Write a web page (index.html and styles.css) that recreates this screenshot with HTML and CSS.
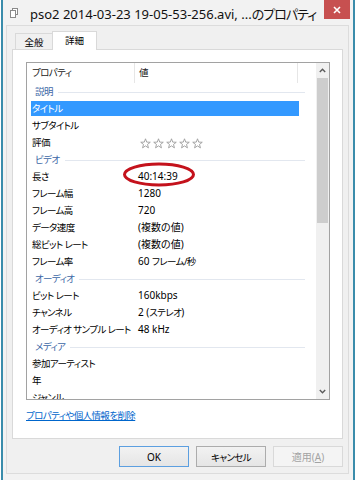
FILE: index.html
```html
<!DOCTYPE html>
<html lang="ja">
<head>
<meta charset="utf-8">
<title>プロパティ</title>
<link rel="stylesheet" href="styles.css">
</head>
<body>
<div class="window">
  <div class="titlebar">
    <svg class="app-icon" width="8" height="10" viewBox="0 0 8 10">
      <rect x="2.5" y="0.5" width="5" height="6" fill="#fff" stroke="#8a8a8a"/>
      <rect x="0.5" y="2.5" width="5" height="7" fill="#fff" stroke="#8a8a8a"/>
    </svg>
    <span class="title">pso2 2014-03-23 19-05-53-256.avi, ...<span class="title-jp">のプロパティ</span></span>
    <div class="close">
      <svg width="8" height="8" viewBox="0 0 8 8"><path d="M1 1 L7 7 M7 1 L1 7" stroke="#fff" stroke-width="1.6"/></svg>
    </div>
  </div>
  <div class="client">
    <div class="tabs">
      <div class="tab">全般</div>
      <div class="tab active">詳細</div>
    </div>
    <div class="panel">
      <div class="list">
        <div class="list-body">
          <div class="header">
            <div class="hcol c1">プロパティ</div>
            <div class="hcol c2">値</div>
            <div class="hcol c3"></div>
          </div>
          <div class="group"><span>説明</span></div>
          <div class="row sel"><span class="k">タイトル</span><span class="v"></span></div>
          <div class="row"><span class="k">サブタイトル</span><span class="v"></span></div>
          <div class="row"><span class="k">評価</span><span class="v stars">
            <svg width="66" height="11" viewBox="0 0 66 11">
              <g fill="#fff" stroke="#9c9c9c" stroke-width="0.9" stroke-linejoin="round">
                <path d="M5.5 0.8 L6.73 4.1 L10.26 4.25 L7.5 6.45 L8.44 9.85 L5.5 7.9 L2.56 9.85 L3.5 6.45 L0.74 4.25 L4.27 4.1Z"/>
                <path transform="translate(13 0)" d="M5.5 0.8 L6.73 4.1 L10.26 4.25 L7.5 6.45 L8.44 9.85 L5.5 7.9 L2.56 9.85 L3.5 6.45 L0.74 4.25 L4.27 4.1Z"/>
                <path transform="translate(26 0)" d="M5.5 0.8 L6.73 4.1 L10.26 4.25 L7.5 6.45 L8.44 9.85 L5.5 7.9 L2.56 9.85 L3.5 6.45 L0.74 4.25 L4.27 4.1Z"/>
                <path transform="translate(39 0)" d="M5.5 0.8 L6.73 4.1 L10.26 4.25 L7.5 6.45 L8.44 9.85 L5.5 7.9 L2.56 9.85 L3.5 6.45 L0.74 4.25 L4.27 4.1Z"/>
                <path transform="translate(52 0)" d="M5.5 0.8 L6.73 4.1 L10.26 4.25 L7.5 6.45 L8.44 9.85 L5.5 7.9 L2.56 9.85 L3.5 6.45 L0.74 4.25 L4.27 4.1Z"/>
              </g>
            </svg>
          </span></div>
          <div class="group"><span>ビデオ</span></div>
          <div class="row"><span class="k">長さ</span><span class="v">40:14:39</span></div>
          <div class="row"><span class="k">フレーム幅</span><span class="v">1280</span></div>
          <div class="row"><span class="k">フレーム高</span><span class="v">720</span></div>
          <div class="row"><span class="k">データ速度</span><span class="v">(複数の値)</span></div>
          <div class="row"><span class="k">総ビット レート</span><span class="v">(複数の値)</span></div>
          <div class="row"><span class="k">フレーム率</span><span class="v">60 <span class="vjp">フレーム/秒</span></span></div>
          <div class="group"><span>オーディオ</span></div>
          <div class="row"><span class="k">ビット レート</span><span class="v">160kbps</span></div>
          <div class="row"><span class="k">チャンネル</span><span class="v">2 (<span class="vjp">ステレオ</span>)</span></div>
          <div class="row"><span class="k">オーディオ サンプル レート</span><span class="v">48 kHz</span></div>
          <div class="group"><span>メディア</span></div>
          <div class="row"><span class="k">参加アーティスト</span><span class="v"></span></div>
          <div class="row"><span class="k">年</span><span class="v"></span></div>
          <div class="row"><span class="k">ジャンル</span><span class="v"></span></div>
        </div>
        <div class="scrollbar">
          <div class="arrow">
            <svg width="7" height="5" viewBox="0 0 7 5"><path d="M0.8 4 L3.5 1.3 L6.2 4" fill="none" stroke="#5a5a5a" stroke-width="1.4"/></svg>
          </div>
          <div class="track"><div class="thumb"></div></div>
          <div class="arrow">
            <svg width="7" height="5" viewBox="0 0 7 5"><path d="M0.8 1 L3.5 3.7 L6.2 1" fill="none" stroke="#5a5a5a" stroke-width="1.4"/></svg>
          </div>
        </div>
      </div>
      <a class="link" href="#">プロパティや個人情報を削除</a>
    </div>
    <div class="buttons">
      <button class="btn default">OK</button>
      <button class="btn jp">キャンセル</button>
      <button class="btn disabled">適用(<u>A</u>)</button>
    </div>
  </div>
  <svg class="annot" width="74" height="26" viewBox="0 0 74 26">
    <ellipse cx="37" cy="12.5" rx="34.5" ry="10.5" fill="none" stroke="#c4121c" stroke-width="3"/>
  </svg>
</div>
</body>
</html>
```

FILE: styles.css
```css
* { box-sizing: border-box; }
html, body { margin: 0; padding: 0; }
body {
  width: 357px;
  height: 480px;
  overflow: hidden;
  background: #ffffff;
  font-family: "Noto Sans", "Noto Sans CJK JP", sans-serif;
  font-size: 10px;
  color: #000;
  font-feature-settings: "palt";
}
.window {
  position: relative;
  margin-left: 1px;
  width: 354px;
  height: 480px;
  background: #f2f2f2;
  border-left: 2px solid #3a8cab;
  border-right: 2px solid #3a8cab;
  display: flex;
  flex-direction: column;
}
.titlebar {
  height: 25px;
  display: flex;
  align-items: flex-start;
  flex: none;
}
.app-icon { margin: 8px 0 0 7px; flex: none; }
.title {
  margin: 5px 0 0 12px;
  font-size: 13px;
  line-height: 18px;
  white-space: nowrap;
  color: #111;
}
.title-jp { letter-spacing: -1px; }
.close {
  margin-left: auto;
  margin-right: 3px;
  width: 26px;
  height: 19px;
  background: #c75050;
  display: flex;
  align-items: center;
  justify-content: center;
  flex: none;
}
.client {
  margin: 0 4px 0 3px;
  height: 449px;
  flex: none;
  background: #f0f0f0;
  border: 1px solid #dcdcdc;
  padding: 5px 5px 0 5px;
  display: flex;
  flex-direction: column;
}
.tabs {
  display: flex;
  align-items: flex-end;
  height: 18px;
  padding-left: 3px;
  flex: none;
}
.tab {
  width: 38px;
  height: 16px;
  border: 1px solid #d9d9d9;
  border-bottom: none;
  background: #f0f0f0;
  text-align: center;
  line-height: 17px;
  font-size: 9.5px;
  color: #000;
}
.tab.active {
  width: 45px;
  height: 19px;
  margin-left: -1px;
  margin-bottom: -1px;
  background: #ffffff;
  position: relative;
  z-index: 1;
  line-height: 17px;
}
.panel {
  height: 390px;
  flex: none;
  background: #ffffff;
  border: 1px solid #d9d9d9;
  padding: 12px 0 0 13px;
}
.list {
  width: 304px;
  height: 338px;
  border: 1px solid #a2a2a2;
  display: flex;
  background: #fff;
}
.list-body {
  flex: 1;
  overflow: hidden;
}
.header {
  height: 20px;
  display: flex;
  line-height: 19px;
  color: #222;
  font-size: 9.5px;
  letter-spacing: -0.6px;
}
.hcol { height: 20px; }
.hcol.c1 { width: 108px; padding-left: 5px; border-right: 1px solid #e6e6e6; }
.hcol.c2 { width: 163px; padding-left: 4px; border-right: 1px solid #e6e6e6; }
.hcol.c3 { flex: 1; }
.group {
  height: 17px;
  display: flex;
  align-items: center;
  padding-left: 8px;
  width: 278px;
  color: #3c67a6;
  line-height: 17px;
  font-size: 9.5px;
  letter-spacing: -0.6px;
}
.group::after {
  content: "";
  flex: 1;
  height: 1px;
  background: #e2e7ef;
  margin-left: 5px;
  margin-top: 1px;
}
.row {
  height: 17px;
  display: grid;
  grid-template-columns: 107px 1fr;
  line-height: 17px;
  white-space: nowrap;
}
.row .k {
  padding-left: 5px;
  font-size: 9.5px;
  letter-spacing: -0.6px;
}
.row .v { padding-left: 4px; overflow: hidden; }
.vjp { font-size: 9.5px; letter-spacing: -0.6px; }
.row.sel {
  height: 15px;
  margin: 1px 0 1px 4px;
  width: 268px;
  background: #3399ff;
  color: #fff;
  line-height: 15px;
  grid-template-columns: 103px 1fr;
}
.row.sel .k { padding-left: 1px; }
.stars { display: flex; align-items: center; padding-top: 1px; }
.stars svg { margin-left: 2px; }
.scrollbar {
  width: 13px;
  flex: none;
  background: #f0f0f0;
  display: flex;
  flex-direction: column;
}
.arrow {
  height: 15px;
  flex: none;
  display: flex;
  align-items: center;
  justify-content: center;
}
.track { flex: 1; }
.thumb {
  height: 145px;
  margin: 0 1px;
  background: #cdcdcd;
}
.link {
  display: inline-block;
  margin-top: 9px;
  line-height: 14px;
  color: #0066cc;
  text-decoration: underline;
  font-size: 9.5px;
  letter-spacing: -0.6px;
}
.buttons {
  display: flex;
  justify-content: flex-end;
  gap: 7px;
  margin-top: 7px;
  flex: none;
}
.btn {
  width: 70px;
  height: 21px;
  padding: 0;
  font-family: "Noto Sans", "Noto Sans CJK JP", sans-serif;
  font-size: 10px;
  font-feature-settings: "palt";
  color: #000;
  border: 1px solid #acacac;
  background: linear-gradient(#f2f2f2, #e5e5e5);
}
.btn.jp { font-size: 9.5px; letter-spacing: -0.6px; }
.btn.default { border-color: #5c9fe0; }
.btn.disabled {
  border-color: #d9d9d9;
  background: #f4f4f4;
  color: #a3a3a3;
}
.annot {
  position: absolute;
  left: 119px;
  top: 162px;
}
```
